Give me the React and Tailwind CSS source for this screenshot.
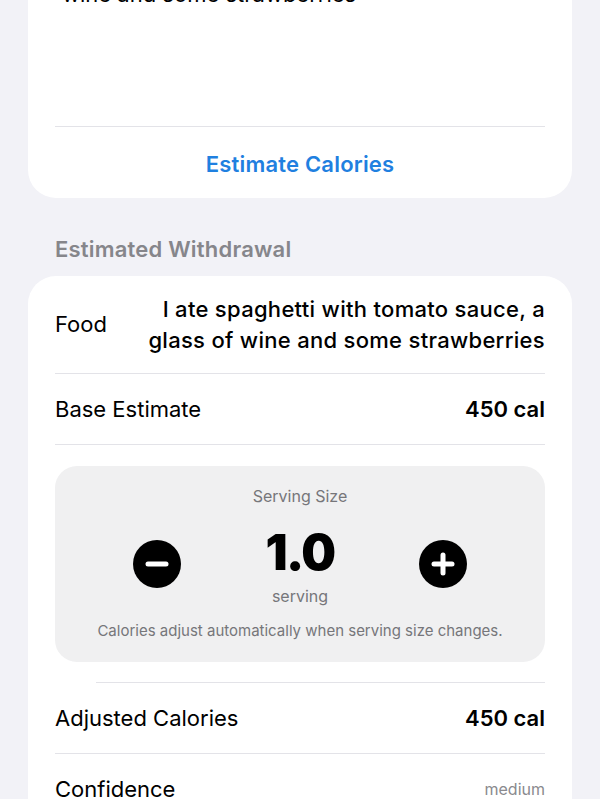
import React, { useState } from "react";

const Divider = ({ inset = "ml-[27px]" }) => <div className={`h-px bg-[#e3e3e8] ${inset}`} />;

const Row = ({ label, children }) => (
  <div className="flex items-center justify-between h-[70px] pl-[27px] pr-[27px]">
    <span className="text-[22px] text-black">{label}</span>
    {children}
  </div>
);

const RoundButton = ({ kind, onClick }) => (
  <button
    type="button"
    onClick={onClick}
    className="mt-[12px] w-[48px] h-[48px] rounded-full bg-black flex items-center justify-center"
  >
    <svg width="24" height="24" viewBox="0 0 24 24">
      <path d="M3 12h18" stroke="white" strokeWidth="5" strokeLinecap="round" />
      {kind === "plus" && <path d="M12 3v18" stroke="white" strokeWidth="5" strokeLinecap="round" />}
    </svg>
  </button>
);

export default function App() {
  const [serving, setServing] = useState(1);
  const base = 450;

  return (
    <div className="min-h-screen bg-[#f2f2f7] overflow-hidden font-['Inter',sans-serif] text-black">
      <div className="px-[28px]">
        {/* input card, scrolled partly out of view */}
        <div className="-mt-[60px] bg-white rounded-[28px]">
          <div className="h-[186px] px-[34px] pt-[12px] text-[22px] leading-[28px]">
            I ate spaghetti with tomato sauce, a glass of
            <br />
            wine and some strawberries
          </div>
          <Divider inset="mx-[27px]" />
          <button type="button" className="w-full h-[71px] pt-[4px] flex items-center justify-center text-[22px] font-semibold tracking-[0.2px] text-[#1f80e0]">
            Estimate Calories
          </button>
        </div>

        <div className="pt-[37px] pb-[13px] pl-[27px] text-[22px] leading-[28px] font-semibold tracking-[0.2px] text-[#86868b]">
          Estimated Withdrawal
        </div>

        <div className="bg-white rounded-[28px] pb-[40px]">
          <div className="flex items-center justify-between pl-[27px] pr-[27px] h-[97px]">
            <span className="text-[22px]">Food</span>
            <span className="text-right text-[22px] leading-[31px] font-medium w-[420px] tracking-[0.3px]">
              I ate spaghetti with tomato sauce, a glass of wine and some strawberries
            </span>
          </div>
          <Divider inset="mx-[27px]" />
          <Row label="Base Estimate">
            <span className="text-[22px] font-semibold">{base} cal</span>
          </Row>
          <Divider inset="mx-[27px]" />

          <div className="mx-[27px] mt-[21px] bg-[#f0f0f1] rounded-[22px] pt-[19px] pb-[21px] flex flex-col items-center">
            <div className="text-[16px] leading-[22px] text-[#76767a]">Serving Size</div>
            <div className="w-full flex items-start justify-between px-[78px] mt-[21px]">
              <RoundButton kind="minus" onClick={() => setServing(Math.max(0.5, serving - 0.5))} />
              <div className="flex flex-col items-center">
                <span className="text-[49px] leading-[50px] font-black tracking-[-1.5px]">{serving.toFixed(1)}</span>
                <span className="mt-[7px] text-[16px] leading-[22px] text-[#76767a]">serving</span>
              </div>
              <RoundButton kind="plus" onClick={() => setServing(serving + 0.5)} />
            </div>
            <div className="mt-[14px] text-[15px] leading-[20px] text-[#76767a]">
              Calories adjust automatically when serving size changes.
            </div>
          </div>

          <div className="mt-[20px]">
            <Divider inset="ml-[68px] mr-[27px]" />
          </div>
          <Row label="Adjusted Calories">
            <span className="text-[22px] font-semibold">{Math.round(base * serving)} cal</span>
          </Row>
          <Divider inset="mx-[27px]" />
          <Row label="Confidence">
            <span className="text-[16px] text-[#8a8a8e]">medium</span>
          </Row>
        </div>
      </div>
    </div>
  );
}
